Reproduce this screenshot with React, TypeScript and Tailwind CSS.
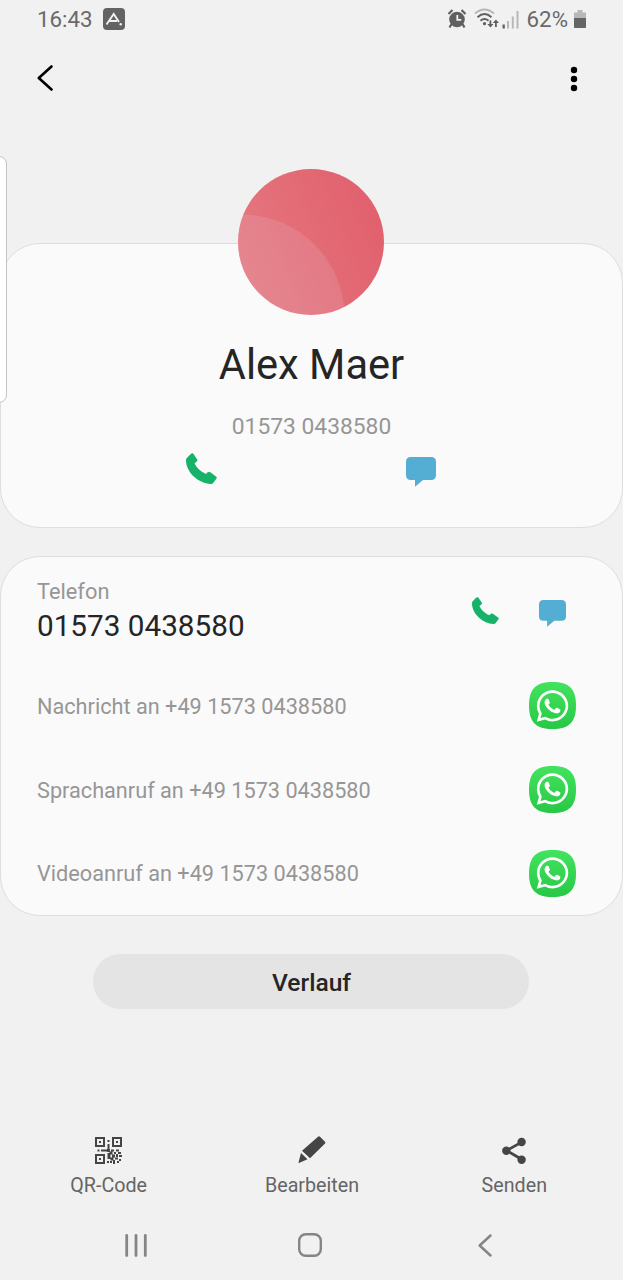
import { FaWhatsapp } from "react-icons/fa";

function Phone({ className }: { className: string }) {
  return (
    <svg viewBox="0 0 31 31" className={className} fill="#17b26a">
      <path d="M7.2.5 11.200 6.4Q11.8 7.500 10.900 8.3L8.500 10.5Q12 17.300 20 21L21.6 19.3Q22.600 18.600 24 19.100L30.3 23.7Q31.2 24.6 30.5 25.4L27 30.2Q26 31.1 24.6 30.9 C13 30.500 .5 20 0 8 Q-.2 6.4.6 5.3L5 .7Q6.200-.3 7.200.5Z" />
    </svg>
  );
}

function Bubble({ className }: { className: string }) {
  return (
    <svg viewBox="0 0 30 30" className={className} fill="#54aed3">
      <path d="M5 0H25Q30 0 30 5V18Q30 23 25 23H17L9 29.7V23H5Q0 23 0 18V5Q0 0 5 0Z" />
    </svg>
  );
}

function WhatsAppTile() {
  return (
    <div className="relative flex size-[47px] items-center justify-center">
      <svg viewBox="0 0 48 48" className="absolute inset-0 size-full">
        <defs>
          <linearGradient id="tile" x1="0" y1="0" x2="0" y2="1">
            <stop offset="0" stopColor="#43e35f" />
            <stop offset="1" stopColor="#27c845" />
          </linearGradient>
        </defs>
        <path fill="url(#tile)" d="M24 0C41 0 48 7 48 24S41 48 24 48 0 41 0 24 7 0 24 0Z" />
      </svg>
      <FaWhatsapp className="relative mr-px h-9 w-[33px] text-white" />
    </div>
  );
}

function QrIcon() {
  return (
    <svg viewBox="0 0 27 27" className="size-[27px]" fill="#454545">
      <path
        fillRule="evenodd"
        d="M0 0h10v10H0zM2 2v6h6V2zM17 0h10v10H17zM19 2v6h6V2zM0 17h10v10H0zM2 19v6h6v-6z"
      />
      <path d="M4 4h2v2H4zM21 4h2v2h-2zM4 21h2v2H4zM12.500 3h2v2h-2zM12.500 7h2v6h-2zM2.500 12.500h2v2h-2zM6 12.500h7v2H6zM12 12h3v3h-3zM16 12.500h3v2h-3zM21 12.500h3v2h-3zM12.500 16h3v6h-3zM14.500 14.500h3v3h-3zM19 15h2v2h-2zM23 15h3v2h-3zM17 17.500h3v3h-3zM21 17h2v3h-2zM24 18h3v2h-3zM15.500 20.500h3v3h-3zM20 20.500h3v2h-3zM24 22h2v2h-2zM12 24h2v2h-2zM15 24h2v2h-2zM18 23h2v4h-2zM22 24h2v2h-2z" />
    </svg>
  );
}

function StatusIcons() {
  return (
    <svg viewBox="0 0 76 22" className="h-[22px] w-[76px]" fill="#606060">
      <circle cx="10" cy="11.500" r="7.800" />
      <path d="M1.500 6 5.500 2M14.500 2 18.500 6M4.500 16 2.500 19.500M15.500 16 17.500 19.500" stroke="#606060" strokeWidth="2.200" />
      <path d="M10.300 7V11.800H14.300" stroke="#f2f2f2" strokeWidth="1.800" fill="none" />
      <g fill="none" strokeWidth="1.900">
        <path d="M28 5.500Q37.500-2.500 47 5.500" stroke="#b5b5b5" />
        <path d="M30.500 9.200Q37.500 3 44.500 9.200M33.500 12.700Q37.500 9.200 41.500 12.700" stroke="#606060" />
      </g>
      <circle cx="37.500" cy="15.700" r="1.600" />
      <path d="M42.500 12.500h1.800V16H46.500L43.400 19.500 40.300 16H42.500zM48 19h1.800V15H52L48.900 11.500 45.800 15H48z" />
      <path d="M55.500 16.500h2.300v4h-2.300z" />
      <path fill="#b8b8b8" d="M60 13h2v7.500h-2zM64.800 8.500h2v12h-2zM69.500 3h2v17.500h-2z" />
    </svg>
  );
}

const rows = ["Nachricht an +49 1573 0438580", "Sprachanruf an +49 1573 0438580", "Videoanruf an +49 1573 0438580"];

export default function App() {
  return (
    <div className="relative flex h-[1280px] w-full flex-col overflow-hidden bg-[#f1f1f1] font-['Roboto',sans-serif] text-[#252525]">
      <header className="flex h-[38px] shrink-0 items-center justify-between pr-[37px] pl-[37px] text-[22.300px] text-[#696969]">
        <div className="flex items-center gap-[10px]">
          <span className="pt-[2px]">16:43</span>
          <svg viewBox="0 0 22 22" className="size-[22px]">
            <rect width="22" height="22" rx="4" fill="#636363" />
            <path d="M3.500 16.500 10.700 6 16 14M6.500 13H14" stroke="#f2f2f2" strokeWidth="1.900" fill="none" />
            <circle cx="17.700" cy="16.200" r="1.200" fill="#f2f2f2" />
          </svg>
        </div>
        <div className="flex items-center">
          <StatusIcons />
          <span className="ml-[4px] pt-[2px]">62%</span>
          <svg viewBox="0 0 12 18" className="ml-[6px] h-[18px] w-3">
            <path d="M3.500 0h5v2.500H12V8H0V2.500H3.500z" fill="#b8b8b8" />
            <path d="M0 8h12v9q0 1-1 1H1q-1 0-1-1z" fill="#666" />
          </svg>
        </div>
      </header>

      <nav className="flex h-20 shrink-0 items-center justify-between px-[37px]">
        <svg viewBox="0 0 16 26" className="h-[26px] w-4">
          <path d="M14.500 1.500 1.800 13 14.500 24.500" fill="none" stroke="#000" strokeWidth="2.600" strokeLinecap="round" strokeLinejoin="round" />
        </svg>
        <svg viewBox="0 0 8 26" className="mt-px mr-2 h-[26px] w-2">
          <circle cx="4" cy="4" r="3.200" />
          <circle cx="4" cy="13" r="3.200" />
          <circle cx="4" cy="22" r="3.200" />
        </svg>
      </nav>

      <section className="mt-[125px] flex h-[285px] shrink-0 flex-col items-center rounded-[40px] border border-[#dedede] bg-[#fafafa]">
        <svg viewBox="0 0 146 146" className="-mt-[75px] mr-px size-[146px] shrink-0">
          <defs>
            <linearGradient id="avatar" x1="0" y1="0.700" x2="1" y2="0.300">
              <stop offset="0" stopColor="#e57880" />
              <stop offset="1" stopColor="#e1606d" />
            </linearGradient>
            <clipPath id="disc">
              <circle cx="73" cy="73" r="73" />
            </clipPath>
          </defs>
          <g clipPath="url(#disc)">
            <rect width="146" height="146" fill="url(#avatar)" />
            <circle cx="4" cy="148" r="102.500" fill="#e7e7f5" fillOpacity="0.130" />
          </g>
        </svg>
        <h1 className="mt-[24px] text-[41.600px] leading-[52px]">Alex Maer</h1>
        <p className="mt-[22px] text-[22.800px] leading-[28px] text-[#969696]">01573 0438580</p>
        <div className="mt-[12px] mr-px flex w-[250px] justify-between">
          <Phone className="size-[31px]" />
          <Bubble className="mt-[4px] size-[30px]" />
        </div>
      </section>

      <section className="mt-[28px] flex h-[360px] shrink-0 flex-col rounded-[40px] border border-[#dedede] bg-[#fafafa] pr-[46px] pl-[36px]">
        <div className="flex h-[107px] items-start justify-between pt-[21px]">
          <div>
            <p className="text-[21.800px] leading-[28px] text-[#969696]">Telefon</p>
            <p className="text-[29.700px] leading-[40px]">01573 0438580</p>
          </div>
          <div className="mt-[19px] mr-[10px] flex gap-[40px]">
            <Phone className="size-[27px]" />
            <Bubble className="mt-[3px] size-[27px]" />
          </div>
        </div>
        {rows.map((row) => (
          <div key={row} className="flex h-[84px] items-center justify-between text-[21.700px] text-[#969696]">
            <span className="pt-[3px]">{row}</span>
            <WhatsAppTile />
          </div>
        ))}
      </section>

      <button className="mt-[38px] ml-[93px] h-[55px] w-[436px] shrink-0 rounded-full bg-[#e4e4e4] pt-[3px] pl-px text-[24.600px] font-medium">
        Verlauf
      </button>

      <footer className="mt-[127px] grid h-[64px] shrink-0 grid-cols-3 pr-[6px] pl-px text-[19.700px] leading-[28px] text-[#656565]">
        <div className="flex flex-col items-center gap-[7px] pt-px pl-[10px]">
          <QrIcon />
          <span className="mt-px">QR-Code</span>
        </div>
        <div className="flex flex-col items-center gap-[8px] pl-[6px]">
          <svg viewBox="0 0 28 28" className="size-7" fill="#454545">
            <path d="M20 .800Q21 -.200 22 .800L27 5.800Q27.800 6.700 27 7.500L12 22.300 4 14.800zM3 17 9.500 23.300 1.500 26.800Q.200 27.300.600 26z" />
          </svg>
          <span>Bearbeiten</span>
        </div>
        <div className="flex flex-col items-center gap-[8px]">
          <svg viewBox="0 0 24 28" className="h-7 w-6" fill="#454545">
            <path d="M20 6 4.500 14.500 20 23.500" stroke="#454545" strokeWidth="2.700" fill="none" />
            <circle cx="4.300" cy="14.700" r="4.200" />
            <circle cx="19.600" cy="6" r="4.200" />
            <circle cx="19.600" cy="23.700" r="4.200" />
          </svg>
          <span>Senden</span>
        </div>
      </footer>

      <nav className="mt-[33px] flex h-6 shrink-0 items-center justify-between pr-[131px] pl-[125px]">
        <svg viewBox="0 0 22 24" className="h-6 w-[22px]">
          <path d="M1.700 2.500V22.500M11 2.500V22.500M20.300 2.500V22.500" stroke="#858585" strokeWidth="2.800" strokeLinecap="round" />
        </svg>
        <svg viewBox="0 0 24 24" className="mr-[6px] size-6">
          <rect x="1.200" y="1.200" width="21.600" height="21.600" rx="6.500" fill="none" stroke="#858585" strokeWidth="2.400" />
        </svg>
        <svg viewBox="0 0 14 24" className="h-6 w-3.5">
          <path d="M12.500 2.500 1.700 12.500 12.500 22.500" fill="none" stroke="#858585" strokeWidth="2.500" strokeLinecap="round" strokeLinejoin="round" />
        </svg>
      </nav>

      <div className="absolute top-[156px] -left-[10px] h-[247px] w-[17px] rounded-[8px] border border-[#c4c4c4] bg-white" />
    </div>
  );
}
